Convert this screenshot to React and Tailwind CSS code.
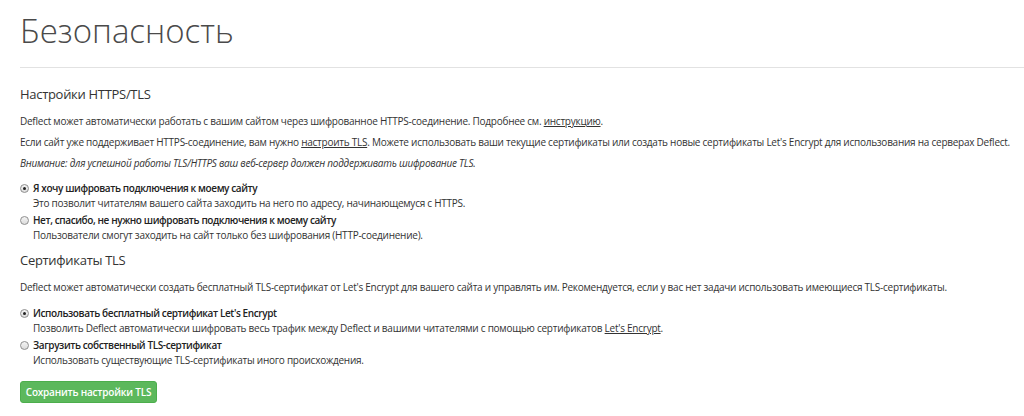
import React, { useState } from 'react';

const Radio = ({ checked, onClick, label, hint, children }) => (
  <div className="mb-[2px] cursor-pointer" onClick={onClick}>
    <div className="flex items-center leading-[15px]">
      <span className="ml-[20px] mr-[4px] flex h-[9px] w-[9px] shrink-0 items-center justify-center rounded-full border border-[#8f8f8f] bg-gradient-to-b from-[#f4f4f4] to-[#dcdcdc]">
        {checked && <span className="h-[3px] w-[3px] rounded-full bg-[#222]" />}
      </span>
      <span className="font-semibold tracking-[-0.4px] text-[#222]">{label}</span>
    </div>
    <div className="pl-[33px] leading-[15px]">{hint || children}</div>
  </div>
);

const App = () => {
  const [https, setHttps] = useState('yes');
  const [cert, setCert] = useState('le');

  return (
    <div className="min-h-screen bg-white pt-[11px] text-[10px] tracking-[-0.25px] text-[#333]" style={{ fontFamily: '"Open Sans", "Liberation Sans", sans-serif' }}>
      <h1 className="pl-[20px] text-[33px] font-light leading-[40px] tracking-normal text-[#4a4a4a]">Безопасность</h1>
      <div className="ml-[20px] mt-[16px] border-t border-[#e2e2e2]" />

      <div className="px-[20px]">
        <h2 className="mt-[16px] mb-[7px] text-[13px] leading-[20px] tracking-[-0.3px] text-[#333]">Настройки HTTPS/TLS</h2>
        <p className="leading-[21px]">
          Deflect может автоматически работать с вашим сайтом через шифрованное HTTPS-соединение. Подробнее см. <a href="#" className="underline">инструкцию</a>.
        </p>
        <p className="whitespace-nowrap leading-[21px]">
          Если сайт уже поддерживает HTTPS-соединение, вам нужно <a href="#" className="underline">настроить TLS</a>. Можете использовать ваши текущие сертификаты или создать новые сертификаты Let's Encrypt для использования на серверах Deflect.
        </p>
        <p className="leading-[21px] italic">
          Внимание: для успешной работы TLS/HTTPS ваш веб-сервер должен поддерживать шифрование TLS.
        </p>
      </div>

      <div className="mt-[7px]">
        <Radio
          checked={https === 'yes'}
          onClick={() => setHttps('yes')}
          label="Я хочу шифровать подключения к моему сайту"
          hint="Это позволит читателям вашего сайта заходить на него по адресу, начинающемуся с HTTPS."
        />
        <Radio
          checked={https === 'no'}
          onClick={() => setHttps('no')}
          label="Нет, спасибо, не нужно шифровать подключения к моему сайту"
          hint="Пользователи смогут заходить на сайт только без шифрования (HTTP-соединение)."
        />
      </div>

      <div className="px-[20px]">
        <h2 className="mt-[7px] mb-[7px] text-[13px] leading-[20px] tracking-[-0.3px] text-[#333]">Сертификаты TLS</h2>
        <p className="leading-[21px]">
          Deflect может автоматически создать бесплатный TLS-сертификат от Let's Encrypt для вашего сайта и управлять им. Рекомендуется, если у вас нет задачи использовать имеющиеся TLS-сертификаты.
        </p>
      </div>

      <div className="mt-[8px]">
        <Radio checked={cert === 'le'} onClick={() => setCert('le')} label="Использовать бесплатный сертификат Let's Encrypt">
          Позволить Deflect автоматически шифровать весь трафик между Deflect и вашими читателями с помощью сертификатов <a href="#" className="underline">Let's Encrypt</a>.
        </Radio>
        <Radio
          checked={cert === 'own'}
          onClick={() => setCert('own')}
          label="Загрузить собственный TLS-сертификат"
          hint="Использовать существующие TLS-сертификаты иного происхождения."
        />
      </div>

      <div className="px-[20px] pt-[11px] pb-[12px]">
        <button className="h-[22px] w-[137px] rounded-[3px] border border-[#4cae4c] bg-[#5cb85c] text-[10px] font-semibold leading-[20px] tracking-[-0.2px] text-white hover:bg-[#449d44]">
          Сохранить настройки TLS
        </button>
      </div>
    </div>
  );
};

export default App;
